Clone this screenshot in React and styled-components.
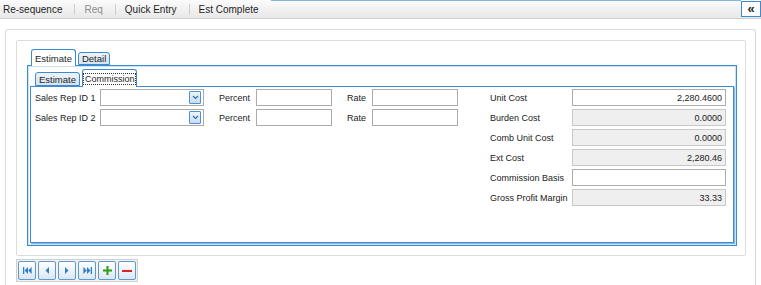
import React from 'react';
import styled, { createGlobalStyle } from 'styled-components';

const BLUE = '#3a8ad4';

const GlobalStyle = createGlobalStyle`
  body {
    margin: 0;
    background: #fff;
    font-family: "Liberation Sans", Arial, sans-serif;
    color: #1e1e1e;
  }
  * { box-sizing: border-box; }
`;

const Page = styled.div`
  width: 761px;
  height: 285px;
  overflow: hidden;
  display: flex;
  flex-direction: column;
`;

const Toolbar = styled.div`
  display: flex;
  align-items: stretch;
  height: 19px;
  border-bottom: 1px solid #d0d0d0;
  background: linear-gradient(#fbfbfb, #e8e8e8);
  font-size: 10px;
`;

const ToolItem = styled.div`
  display: flex;
  align-items: center;
  padding: 0 12px 0 3px;
  color: ${({ $disabled }) => ($disabled ? '#8c8c8c' : '#1e1e1e')};
`;

const ToolSep = styled.span`
  width: 1px;
  height: 11px;
  align-self: center;
  background: #cdcdcd;
  margin-right: 6px;
`;

const ToolFill = styled.div`
  flex: 1;
  border-top: 1px solid #86b5de;
`;

const CollapseButton = styled.div`
  width: 20px;
  height: 16px;
  margin-top: 1px;
  border: 1px solid ${BLUE};
  background: #fff;
  display: flex;
  align-items: center;
  justify-content: center;
  font-size: 13px;
  font-weight: bold;
  line-height: 1;
  padding-bottom: 2px;
`;

const OuterPanel = styled.div`
  flex: 1;
  margin: 10px 5px 0 5px;
  border: 1px solid #dadada;
  border-bottom: none;
  border-radius: 3px 3px 0 0;
  padding: 10px 9px 0 10px;
  display: flex;
  flex-direction: column;
  gap: 3px;
`;

const InnerPanel = styled.div`
  height: 216px;
  border: 1px solid #dcdcdc;
  border-radius: 2px;
  padding: 8px 8px 9px 10px;
  display: flex;
  flex-direction: column;
`;

const TabStrip = styled.div`
  display: flex;
  align-items: flex-end;
  gap: 2px;
  padding-left: ${({ $indent }) => $indent}px;
  position: relative;
  z-index: 1;
`;

const Tab = styled.div`
  height: ${({ $active, $h }) => ($active ? $h + 1 : $h - 3)}px;
  margin-bottom: ${({ $active }) => ($active ? -1 : 0)}px;
  padding: 0 ${({ $pad }) => $pad ?? 3}px;
  border: 1px solid ${BLUE};
  border-bottom: ${({ $active }) => ($active ? 'none' : `1px solid ${BLUE}`)};
  border-radius: 3px 3px 0 0;
  background: ${({ $active }) =>
    $active ? '#fff' : 'linear-gradient(#eef3f9, #d6e3f0)'};
  display: flex;
  align-items: center;
  font-size: ${({ $fs }) => $fs ?? 9.5}px;
  color: #1e1e1e;
`;

const FocusText = styled.span`
  outline: 1px dotted #333;
  outline-offset: 0;
  padding: 0 1px;
`;

const TabPanel = styled.div`
  flex: 1;
  border: 1px solid ${BLUE};
  box-shadow: inset 0 0 0 1px #cfe2f4;
  padding: 3px 2px 2px 2px;
  display: flex;
  flex-direction: column;
`;

const SubPanel = styled.div`
  flex: 1;
  border: 1px solid ${BLUE};
  box-shadow: 1px 1px 0 #8dbbe5;
  background: #fff;
  padding: 2px 7px 0 4px;
  display: flex;
  align-items: flex-start;
`;

const LeftForm = styled.div`
  display: flex;
  flex-direction: column;
  gap: 3px;
`;

const Row = styled.div`
  display: flex;
  align-items: center;
  gap: 15px;
`;

const Pair = styled.div`
  display: flex;
  align-items: center;
`;

const Label = styled.span`
  width: ${({ $w }) => $w}px;
  font-size: 9px;
  white-space: nowrap;
  color: #1a1a1a;
`;

const Field = styled.input`
  width: ${({ $w }) => ($w ? `${$w}px` : '100%')};
  height: 17px;
  margin: 0;
  border: 1px solid ${({ readOnly }) => (readOnly ? '#c8c8c8' : '#ababab')};
  background: ${({ readOnly }) => (readOnly ? '#efefef' : '#fff')};
  font-family: "Liberation Sans", Arial, sans-serif;
  font-size: 9px;
  color: #1a1a1a;
  text-align: right;
  padding: 0 3px;
  outline: none;
`;

const Combo = styled.div`
  width: 104px;
  height: 17px;
  border: 1px solid #ababab;
  background: #fff;
  display: flex;
  align-items: center;
  justify-content: flex-end;
  padding-right: 2px;
`;

const DropButton = styled.span`
  width: 12px;
  height: 13px;
  border: 1px solid #4f90cf;
  border-radius: 1px;
  background: linear-gradient(#eef5fc, #c8dcf0);
  display: flex;
  align-items: center;
  justify-content: center;
`;

const RightForm = styled.div`
  margin-left: auto;
  display: grid;
  grid-template-columns: 82px 154px;
  grid-auto-rows: 17px;
  row-gap: 3px;
  align-items: center;
`;

const NavBar = styled.div`
  align-self: flex-start;
  display: flex;
  gap: 2px;
  padding: 1px;
  border: 1px solid #cfcfcf;
  background: #f2f2f2;
`;

const NavButton = styled.div`
  width: 18px;
  height: 19px;
  border: 1px solid #5b9bd5;
  border-radius: 2px;
  background: linear-gradient(#ffffff, #dbe7f3);
  display: flex;
  align-items: center;
  justify-content: center;
`;

const Chevron = () => (
  <svg width="7" height="5" viewBox="0 0 7 5">
    <path d="M1 1 L3.5 3.5 L6 1" fill="none" stroke="#2d6fb0" strokeWidth="1.2" />
  </svg>
);

const NAV_BLUE = '#2f7fc8';

const icons = {
  first: (
    <svg width="9" height="7" viewBox="0 0 9 7">
      <rect x="0" y="0" width="1.3" height="7" fill={NAV_BLUE} />
      <polygon points="5,0 1.6,3.5 5,7" fill={NAV_BLUE} />
      <polygon points="8.6,0 5.2,3.5 8.6,7" fill={NAV_BLUE} />
    </svg>
  ),
  prev: (
    <svg width="4" height="7" viewBox="0 0 4 7">
      <polygon points="4,0 0.5,3.5 4,7" fill={NAV_BLUE} />
    </svg>
  ),
  next: (
    <svg width="4" height="7" viewBox="0 0 4 7">
      <polygon points="0,0 3.5,3.5 0,7" fill={NAV_BLUE} />
    </svg>
  ),
  last: (
    <svg width="9" height="7" viewBox="0 0 9 7">
      <polygon points="0.4,0 3.8,3.5 0.4,7" fill={NAV_BLUE} />
      <polygon points="4,0 7.4,3.5 4,7" fill={NAV_BLUE} />
      <rect x="7.7" y="0" width="1.3" height="7" fill={NAV_BLUE} />
    </svg>
  ),
  add: (
    <svg width="9" height="9" viewBox="0 0 9 9">
      <rect x="3.5" y="0" width="2" height="9" fill="#2f9a16" />
      <rect x="0" y="3.5" width="9" height="2" fill="#2f9a16" />
    </svg>
  ),
  remove: (
    <svg width="10" height="2" viewBox="0 0 10 2">
      <rect x="0" y="0" width="10" height="2" fill="#e02424" />
    </svg>
  ),
};

const toolItems = [
  { label: 'Re-sequence' },
  { label: 'Req', disabled: true },
  { label: 'Quick Entry' },
  { label: 'Est Complete' },
];

const costs = [
  { label: 'Unit Cost', value: '2,280.4600' },
  { label: 'Burden Cost', value: '0.0000', readOnly: true },
  { label: 'Comb Unit Cost', value: '0.0000', readOnly: true },
  { label: 'Ext Cost', value: '2,280.46', readOnly: true },
  { label: 'Commission Basis', value: '' },
  { label: 'Gross Profit Margin', value: '33.33', readOnly: true },
];

const RepRow = ({ n }) => (
  <Row>
    <Pair>
      <Label $w={65}>Sales Rep ID {n}</Label>
      <Combo>
        <DropButton>
          <Chevron />
        </DropButton>
      </Combo>
    </Pair>
    <Pair>
      <Label $w={37}>Percent</Label>
      <Field $w={76} defaultValue="" />
    </Pair>
    <Pair>
      <Label $w={25}>Rate</Label>
      <Field $w={86} defaultValue="" />
    </Pair>
  </Row>
);

export default function App() {
  return (
    <Page>
      <GlobalStyle />
      <Toolbar>
        {toolItems.map((item, i) => (
          <React.Fragment key={item.label}>
            {i > 0 && <ToolSep />}
            <ToolItem $disabled={item.disabled}>{item.label}</ToolItem>
          </React.Fragment>
        ))}
        <ToolFill />
        <CollapseButton>«</CollapseButton>
      </Toolbar>

      <OuterPanel>
        <InnerPanel>
          <TabStrip $indent={4}>
            <Tab $active $h={16}>Estimate</Tab>
            <Tab $h={16}>Detail</Tab>
          </TabStrip>
          <TabPanel>
            <TabStrip $indent={5}>
              <Tab $h={17}>Estimate</Tab>
              <Tab $active $h={17} $pad={1} $fs={9}>
                <FocusText>Commission</FocusText>
              </Tab>
            </TabStrip>
            <SubPanel>
              <LeftForm>
                <RepRow n={1} />
                <RepRow n={2} />
              </LeftForm>
              <RightForm>
                {costs.map((c) => (
                  <React.Fragment key={c.label}>
                    <Label $w={82}>{c.label}</Label>
                    <Field readOnly={c.readOnly} defaultValue={c.value} />
                  </React.Fragment>
                ))}
              </RightForm>
            </SubPanel>
          </TabPanel>
        </InnerPanel>

        <NavBar>
          {['first', 'prev', 'next', 'last', 'add', 'remove'].map((k) => (
            <NavButton key={k}>{icons[k]}</NavButton>
          ))}
        </NavBar>
      </OuterPanel>
    </Page>
  );
}
